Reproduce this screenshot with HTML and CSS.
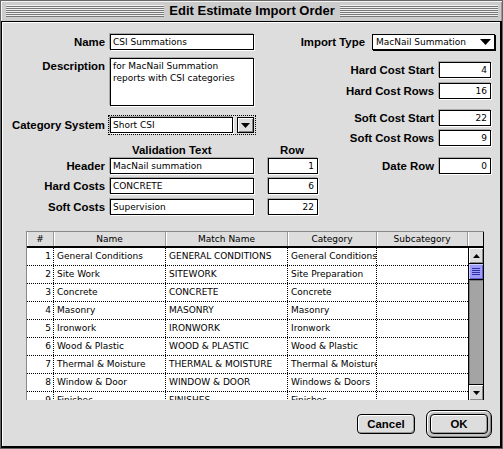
FILE: index.html
```html
<!DOCTYPE html>
<html>
<head>
<meta charset="utf-8">
<title>Edit Estimate Import Order</title>
<link rel="stylesheet" href="styles.css">
</head>
<body>
<div class="window">
  <div class="titlebar">
    <div class="stripes"></div>
    <div class="title">Edit Estimate Import Order</div>
    <div class="stripes"></div>
  </div>
  <div class="content">
    <div class="top">
      <div class="left">
        <div class="row r-name"><span class="lbl">Name</span><div class="field w144">CSI Summations</div></div>
        <div class="row r-desc"><span class="lbl">Description</span><div class="field w144 area">for MacNail Summation<br>reports with CSI categories</div></div>
        <div class="row r-cat"><span class="lbl">Category System</span>
          <div class="focus">
            <div class="field combo">Short CSI</div>
            <div class="dropbtn"><svg width="9" height="5" viewBox="0 0 9 5"><polygon points="0,0 9,0 4.5,5" fill="#000"/></svg></div>
          </div>
        </div>
        <div class="row r-vhead"><span class="lbl"></span><div class="colhead vt">Validation Text</div><div class="colhead rh">Row</div></div>
        <div class="row r-v1"><span class="lbl">Header</span><div class="field w144">MacNail summation</div><div class="field w50 num">1</div></div>
        <div class="row r-v2"><span class="lbl">Hard Costs</span><div class="field w144">CONCRETE</div><div class="field w50 num">6</div></div>
        <div class="row r-v3"><span class="lbl">Soft Costs</span><div class="field w144">Supervision</div><div class="field w50 num">22</div></div>
      </div>
      <div class="right">
        <div class="rrow imp"><span class="rlbl">Import Type</span>
          <div class="popup"><span>MacNail Summation</span><svg width="11" height="6" viewBox="0 0 11 6"><polygon points="0,0 11,0 5.5,6" fill="#000"/></svg></div>
        </div>
        <div class="rrow cost c1"><span class="rlbl">Hard Cost Start</span><div class="field w52 num">4</div></div>
        <div class="rrow cost c2"><span class="rlbl">Hard Cost Rows</span><div class="field w52 num">16</div></div>
        <div class="rrow cost c3"><span class="rlbl">Soft Cost Start</span><div class="field w52 num">22</div></div>
        <div class="rrow cost c4"><span class="rlbl">Soft Cost Rows</span><div class="field w52 num">9</div></div>
        <div class="rrow cost c5"><span class="rlbl">Date Row</span><div class="field w52 num">0</div></div>
      </div>
    </div>

    <div class="table">
      <div class="thead">
        <div class="th c-n">#</div>
        <div class="th c-name">Name</div>
        <div class="th c-match">Match Name</div>
        <div class="th c-cat">Category</div>
        <div class="th c-sub">Subcategory</div>
        <div class="th c-sb"></div>
      </div>
      <div class="tbody">
        <div class="rows">
          <div class="tr"><div class="td c-n num">1</div><div class="td c-name">General Conditions</div><div class="td c-match">GENERAL CONDITIONS</div><div class="td c-cat">General Conditions</div><div class="td c-sub"></div></div>
          <div class="tr"><div class="td c-n num">2</div><div class="td c-name">Site Work</div><div class="td c-match">SITEWORK</div><div class="td c-cat">Site Preparation</div><div class="td c-sub"></div></div>
          <div class="tr"><div class="td c-n num">3</div><div class="td c-name">Concrete</div><div class="td c-match">CONCRETE</div><div class="td c-cat">Concrete</div><div class="td c-sub"></div></div>
          <div class="tr"><div class="td c-n num">4</div><div class="td c-name">Masonry</div><div class="td c-match">MASONRY</div><div class="td c-cat">Masonry</div><div class="td c-sub"></div></div>
          <div class="tr"><div class="td c-n num">5</div><div class="td c-name">Ironwork</div><div class="td c-match">IRONWORK</div><div class="td c-cat">Ironwork</div><div class="td c-sub"></div></div>
          <div class="tr"><div class="td c-n num">6</div><div class="td c-name">Wood &amp; Plastic</div><div class="td c-match">WOOD &amp; PLASTIC</div><div class="td c-cat">Wood &amp; Plastic</div><div class="td c-sub"></div></div>
          <div class="tr"><div class="td c-n num">7</div><div class="td c-name">Thermal &amp; Moisture</div><div class="td c-match">THERMAL &amp; MOISTURE</div><div class="td c-cat">Thermal &amp; Moisture</div><div class="td c-sub"></div></div>
          <div class="tr"><div class="td c-n num">8</div><div class="td c-name">Window &amp; Door</div><div class="td c-match">WINDOW &amp; DOOR</div><div class="td c-cat">Windows &amp; Doors</div><div class="td c-sub"></div></div>
          <div class="tr"><div class="td c-n num">9</div><div class="td c-name">Finishes</div><div class="td c-match">FINISHES</div><div class="td c-cat">Finishes</div><div class="td c-sub"></div></div>
        </div>
        <div class="scroll">
          <div class="sb-btn up"><svg width="7" height="4" viewBox="0 0 7 4"><polygon points="3.5,0 7,4 0,4" fill="#000"/></svg></div>
          <div class="thumb"><div class="grip"></div></div>
          <div class="track"></div>
          <div class="sb-btn down"><svg width="7" height="4" viewBox="0 0 7 4"><polygon points="0,0 7,0 3.5,4" fill="#000"/></svg></div>
        </div>
      </div>
    </div>

    <div class="buttons">
      <div class="btn">Cancel</div>
      <div class="ring"><div class="btn">OK</div></div>
    </div>
  </div>
</div>
</body>
</html>
```

FILE: styles.css
```css
* { box-sizing: border-box; }
html, body { margin: 0; padding: 0; }
body {
  width: 503px;
  height: 449px;
  overflow: hidden;
  background: #ddd;
  font-family: "DejaVu Sans", sans-serif;
  color: #000;
}
.window {
  width: 503px;
  height: 449px;
  border: 1px solid #666;
  display: flex;
  flex-direction: column;
  background: #ddd;
}
.titlebar {
  height: 20px;
  flex: none;
  display: flex;
  align-items: center;
  padding: 0 4px 0 5px;
  background: #ccc;
  box-shadow: inset 1px 1px 0 #f4f4f4, inset -1px 0 0 #999;
}
.stripes {
  flex: 1;
  height: 12px;
  background: repeating-linear-gradient(to bottom, #f0f0f0 0 1px, #777 1px 2px);
}
.title {
  padding: 0 5px;
  font: bold 13px/20px "Liberation Sans", Arial, sans-serif;
  white-space: nowrap;
}
.content {
  flex: 1;
  border: 1px solid #000;
  border-right-width: 2px;
  border-bottom-width: 2px;
  box-shadow: inset 1px 1px 0 #fff;
  padding-top: 12px;
  display: flex;
  flex-direction: column;
}

/* top form */
.top { display: flex; }
.left {
  flex: none;
  width: 316px;
  padding-left: 6px;
  display: flex;
  flex-direction: column;
}
.right {
  flex: 1;
  min-width: 0;
  padding-right: 5px;
  display: flex;
  flex-direction: column;
  align-items: flex-end;
}
.row {
  display: flex;
  align-items: center;
  gap: 5px;
  height: 16px;
}
.lbl, .rlbl {
  font: bold 11.4px/16px "Liberation Sans", Arial, sans-serif;
  white-space: nowrap;
}
.lbl { width: 97px; text-align: right; flex: none; }
.rlbl { flex: none; }
.r-desc { height: 48px; align-items: flex-start; margin-top: 8px; }
.r-cat { margin-top: 11px; }
.r-vhead { margin-top: 11px; height: 13px; }
.r-v1 { margin-top: 1px; }
.r-v2 { margin-top: 4px; }
.r-v3 { margin-top: 5px; }

.field {
  background: #fff;
  border: 1px solid #000;
  height: 16px;
  font: 9px/14px "DejaVu Sans", sans-serif;
  padding: 0 2px;
  white-space: nowrap;
  overflow: hidden;
  box-shadow: -1px -1px 0 #aaa, 1px 1px 0 #fff;
  flex: none;
}
.w144 { width: 144px; }
.w50 { width: 50px; margin-left: 9px; }
.w52 { width: 52px; }
.num { text-align: right; padding-right: 3px; }
.area { height: 48px; line-height: 12px; padding-top: 1px; white-space: normal; }

.focus {
  display: flex;
  gap: 4px;
  outline: 1px dotted #000;
  outline-offset: 1px;
}
.combo { width: 123px; }
.dropbtn {
  width: 17px;
  height: 16px;
  border: 1px solid #000;
  background: #ddd;
  box-shadow: inset 1px 1px 0 #fff, inset -1px -1px 0 #888;
  display: flex;
  align-items: center;
  justify-content: center;
}
.colhead {
  font: bold 11.4px/13px "Liberation Sans", Arial, sans-serif;
  white-space: nowrap;
}
.vt { width: 144px; padding-left: 22px; }
.rh { width: 50px; margin-left: 9px; padding-left: 12px; }

.rrow {
  display: flex;
  align-items: center;
  gap: 5px;
  height: 16px;
  flex: none;
}
.imp { gap: 7px; }
.cost { margin-right: 4px; }
.c1 { margin-top: 12px; }
.c2 { margin-top: 5px; }
.c3 { margin-top: 11px; }
.c4 { margin-top: 4px; }
.c5 { margin-top: 12px; }
.popup {
  width: 123px;
  height: 16px;
  flex: none;
  background: #fff;
  border: 1px solid #000;
  box-shadow: 1px 1px 0 #000;
  display: flex;
  align-items: center;
  justify-content: space-between;
  padding: 0 3px 0 3px;
  font: 9px/14px "DejaVu Sans", sans-serif;
  white-space: nowrap;
}

/* table */
.table {
  margin: 16px 0 0 24px;
  width: 458px;
  border-left: 1px solid #888;
}
.thead {
  display: flex;
  height: 17px;
  border-top: 1px solid #888;
  border-bottom: 2px solid #000;
  background: #ddd;
}
.th {
  font: 9px/14px "DejaVu Sans", sans-serif;
  text-align: center;
  border-right: 1px solid #999;
  box-shadow: inset 1px 0 0 #fff;
  white-space: nowrap;
  overflow: hidden;
  flex: none;
}
.th.c-sb { border-right: 1px solid #000; }
.c-n { width: 27px; }
.c-name { width: 112px; }
.c-match { width: 122px; }
.c-cat { width: 89px; }
.c-sub { width: 91px; }
.c-sb { width: 16px; }
.tbody {
  display: flex;
  height: 152px;
}
.rows {
  width: 441px;
  overflow: hidden;
  background: #fff;
}
.tr {
  display: flex;
  height: 18px;
  border-bottom: 1px dotted #000;
}
.td {
  font: 9px/17px "DejaVu Sans", sans-serif;
  padding: 0 2px 0 3px;
  border-right: 1px dotted #000;
  white-space: nowrap;
  overflow: hidden;
  flex: none;
}
.td.num { text-align: right; padding-right: 2px; }
.td.c-sub { border-right: 0; }

.scroll {
  width: 16px;
  flex: none;
  border-left: 1px solid #000;
  border-right: 1px solid #000;
  background: #a4a4a4;
  display: flex;
  flex-direction: column;
}
.sb-btn {
  height: 16px;
  flex: none;
  background: #ddd;
  box-shadow: inset 1px 1px 0 #fff, inset -1px -1px 0 #888;
  display: flex;
  align-items: center;
  justify-content: center;
}
.sb-btn.up { border-bottom: 1px solid #000; }
.sb-btn.down { border-top: 1px solid #000; }
.thumb {
  height: 16px;
  flex: none;
  background: #9c9cff;
  border-bottom: 1px solid #000;
  box-shadow: inset 1px 1px 0 #ccccff, inset -1px -1px 0 #6262c8;
  display: flex;
  align-items: center;
  justify-content: center;
}
.grip {
  width: 8px;
  height: 7px;
  background: repeating-linear-gradient(to bottom, #3030a0 0 1px, transparent 1px 2px);
}
.track {
  flex: 1;
  box-shadow: inset 1px 1px 0 #7a7a7a;
}

/* buttons */
.buttons {
  display: flex;
  justify-content: flex-end;
  align-items: center;
  gap: 11px;
  margin-top: 10px;
  padding-right: 8px;
}
.btn {
  width: 58px;
  height: 20px;
  border: 1px solid #000;
  border-radius: 4px;
  background: #ddd;
  box-shadow: inset 1px 1px 0 #fff, inset -1px -1px 0 #999;
  font: bold 11.4px/18px "Liberation Sans", Arial, sans-serif;
  text-align: center;
}
.ring {
  width: 66px;
  height: 28px;
  border: 1px solid #000;
  border-radius: 7px;
  padding: 3px;
  background: #c4c4c4;
  box-shadow: inset 1px 1px 0 #fff, inset -1px -1px 0 #888;
}
```
